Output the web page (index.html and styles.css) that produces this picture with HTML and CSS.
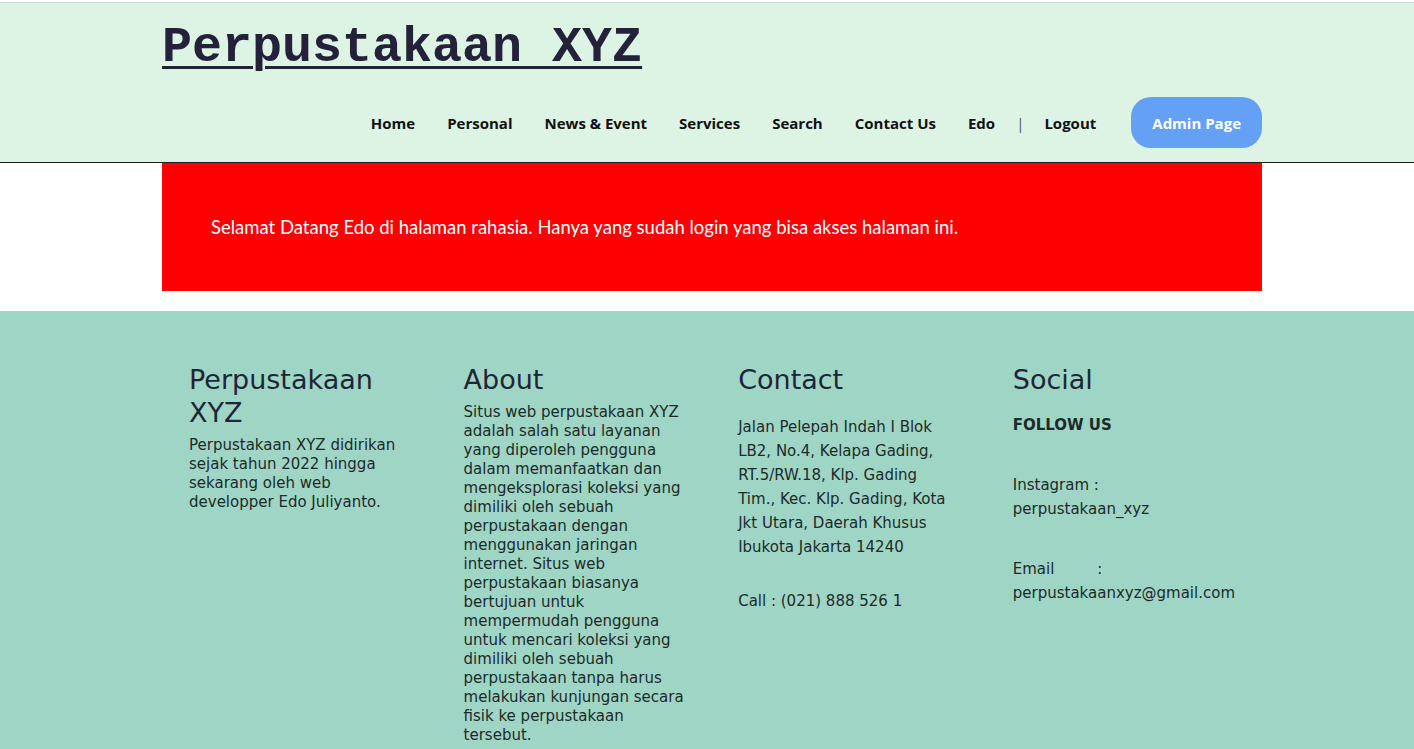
FILE: index.html
```html
<!DOCTYPE html>
<html lang="id">
<head>
<meta charset="utf-8">
<title>Perpustakaan XYZ</title>
<link rel="stylesheet" href="styles.css">
</head>
<body>
<div class="topline"></div>
<header class="site-header">
  <div class="container">
    <h1 class="brand"><a href="#">Perpustakaan XYZ</a></h1>
    <nav class="nav">
      <a href="#">Home</a>
      <a href="#">Personal</a>
      <a href="#">News &amp; Event</a>
      <a href="#">Services</a>
      <a href="#">Search</a>
      <a href="#">Contact Us</a>
      <a href="#" class="user">Edo</a>
      <span class="sep">|</span>
      <a href="#" class="logout">Logout</a>
      <a href="#" class="admin-btn">Admin Page</a>
    </nav>
  </div>
</header>
<main class="container">
  <div class="alert">Selamat Datang Edo di halaman rahasia. Hanya yang sudah login yang bisa akses halaman ini.</div>
</main>
<footer class="site-footer">
  <div class="container footer-grid">
    <div class="col">
      <h2>Perpustakaan XYZ</h2>
      <p>Perpustakaan XYZ didirikan sejak tahun 2022 hingga sekarang oleh web developper Edo Juliyanto.</p>
    </div>
    <div class="col">
      <h2>About</h2>
      <p>Situs web perpustakaan XYZ adalah salah satu layanan yang diperoleh pengguna dalam memanfaatkan dan mengeksplorasi koleksi yang dimiliki oleh sebuah perpustakaan dengan menggunakan jaringan internet. Situs web perpustakaan biasanya bertujuan untuk mempermudah pengguna untuk mencari koleksi yang dimiliki oleh sebuah perpustakaan tanpa harus melakukan kunjungan secara fisik ke perpustakaan tersebut.</p>
    </div>
    <div class="col contact">
      <h2>Contact</h2>
      <p>Jalan Pelepah Indah I Blok LB2, No.4, Kelapa Gading, RT.5/RW.18, Klp. Gading Tim., Kec. Klp. Gading, Kota Jkt Utara, Daerah Khusus Ibukota Jakarta 14240</p>
      <p class="call">Call : (021) 888 526 1</p>
    </div>
    <div class="col social">
      <h2>Social</h2>
      <h3>Follow Us</h3>
      <p>Instagram :<br>perpustakaan_xyz</p>
      <p>Email &nbsp; &nbsp; &nbsp; &nbsp; :<br>perpustakaanxyz@gmail.com</p>
    </div>
  </div>
</footer>
</body>
</html>
```

FILE: styles.css
```css
html, body {
  margin: 0;
  padding: 0;
  background: #ffffff;
}
body {
  font-family: "DejaVu Sans", sans-serif;
}
.topline {
  height: 2px;
  background: #ffffff;
  border-bottom: 1px solid #d2d8d5;
}
.container {
  width: 1100px;
  margin-left: calc(50% - 545px);
}
.site-header {
  background: #ddf3e4;
  border-bottom: 1px solid #1f1f1f;
  padding: 19px 0 14px;
}
.brand {
  margin: 0;
  font-family: "Liberation Mono", "Courier New", monospace;
  font-size: 50px;
  font-weight: 700;
  line-height: 52px;
}
.brand a {
  color: #24223a;
  text-decoration: underline;
  text-decoration-thickness: 3px;
  text-underline-offset: 5px;
}
.nav {
  display: flex;
  justify-content: flex-end;
  align-items: center;
  margin-top: 23px;
  font-family: "Open Sans", sans-serif;
  font-size: 15px;
  font-weight: 700;
}
.nav a {
  color: #111111;
  text-decoration: none;
  margin-left: 32px;
}
.nav .sep {
  color: #555;
  font-weight: 400;
  margin: 0 20px 0 21px;
}
.nav .logout {
  margin-left: 0;
}
.nav .admin-btn {
  margin-left: 35px;
  height: 51px;
  box-sizing: border-box;
  display: flex;
  align-items: center;
  padding: 0 21px;
  background: #64a0f4;
  color: #ffffff;
  border-radius: 20px;
}
.alert {
  background: #ff0000;
  color: #ffffff;
  height: 128px;
  display: flex;
  align-items: center;
  padding-left: 49px;
  box-sizing: border-box;
  font-family: "Lato", sans-serif;
  font-size: 18.5px;
  margin-bottom: 20px;
}
.site-footer {
  background: #9fd5c5;
  color: #1c2a2a;
  padding: 52px 0 10px;
}
.footer-grid {
  display: grid;
  grid-template-columns: repeat(4, 1fr);
}
.col {
  padding: 0 27px;
}
.col h2 {
  margin: 0;
  font-size: 27px;
  font-weight: 400;
  line-height: 33px;
  color: #1e2538;
}
.col p {
  margin: 7px 0 0;
  font-size: 15px;
  line-height: 19px;
}
.contact p {
  margin-top: 19px;
  line-height: 24px;
}
.contact .call {
  margin-top: 30px;
}
.social h3 {
  margin: 17px 0 0;
  font-size: 15px;
  font-weight: 700;
  text-transform: uppercase;
  line-height: 24px;
}
.social p {
  line-height: 24px;
  margin-top: 36px;
}
```
